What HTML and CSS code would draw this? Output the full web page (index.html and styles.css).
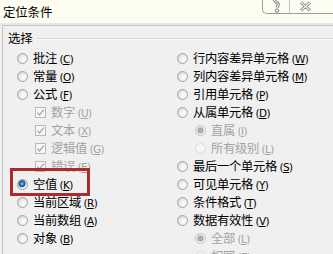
FILE: index.html
```html
<!DOCTYPE html>
<html lang="zh-CN">
<head>
<meta charset="utf-8">
<link rel="stylesheet" href="styles.css">
</head>
<body>
<div class="dlg">
  <div class="titlebar">
    <span class="title">定位条件</span>
    <div class="caps">
      <span class="cap help">
        <svg width="10" height="14" viewBox="0 0 10 14">
          <path d="M2.5 0 C2.5 3 7.5 2.5 6 5.5 L5.2 7.5" fill="none" stroke="#7a7a7a" stroke-width="3"/>
          <path d="M2.5 0 C2.5 3 7.5 2.5 6 5.5 L5.2 7.5" fill="none" stroke="#fdfcf1" stroke-width="1.1"/>
          <circle cx="5" cy="10.6" r="1.7" fill="none" stroke="#7a7a7a" stroke-width="1"/>
        </svg>
      </span>
      <span class="cap close">
        <svg width="13" height="11" viewBox="0 0 13 11">
          <path d="M2 1.5 L11 9.5 M11 1.5 L2 9.5" fill="none" stroke="#7a7a7a" stroke-width="3"/>
          <path d="M2 1.5 L11 9.5 M11 1.5 L2 9.5" fill="none" stroke="#fdfcf1" stroke-width="1.1"/>
        </svg>
      </span>
    </div>
  </div>
  <div class="client">
    <div class="ghead"><span class="glabel">选择</span><i class="gline"></i></div>
    <div class="cols">
      <div class="col">
        <div class="row"><span class="radio"></span><span class="lbl">批注 <span class="acc">(<u>C</u>)</span></span></div>
        <div class="row"><span class="radio"></span><span class="lbl">常量 <span class="acc">(<u>O</u>)</span></span></div>
        <div class="row"><span class="radio"></span><span class="lbl">公式 <span class="acc">(<u>F</u>)</span></span></div>
        <div class="row sub dis"><span class="check"><svg width="9" height="9" viewBox="0 0 9 9"><path d="M1.3 4.6 L3.5 7 L7.8 1.6" fill="none" stroke="#a9a9a9" stroke-width="1.4"/></svg></span><span class="lbl">数字 <span class="acc">(<u>U</u>)</span></span></div>
        <div class="row sub dis"><span class="check"><svg width="9" height="9" viewBox="0 0 9 9"><path d="M1.3 4.6 L3.5 7 L7.8 1.6" fill="none" stroke="#a9a9a9" stroke-width="1.4"/></svg></span><span class="lbl">文本 <span class="acc">(<u>X</u>)</span></span></div>
        <div class="row sub dis"><span class="check"><svg width="9" height="9" viewBox="0 0 9 9"><path d="M1.3 4.6 L3.5 7 L7.8 1.6" fill="none" stroke="#a9a9a9" stroke-width="1.4"/></svg></span><span class="lbl">逻辑值 <span class="acc">(<u>G</u>)</span></span></div>
        <div class="row sub dis"><span class="check"><svg width="9" height="9" viewBox="0 0 9 9"><path d="M1.3 4.6 L3.5 7 L7.8 1.6" fill="none" stroke="#a9a9a9" stroke-width="1.4"/></svg></span><span class="lbl">错误 <span class="acc">(<u>E</u>)</span></span></div>
        <div class="row hl"><span class="radio on"></span><span class="lbl">空值 <span class="acc">(<u>K</u>)</span></span></div>
        <div class="row"><span class="radio"></span><span class="lbl">当前区域 <span class="acc">(<u>R</u>)</span></span></div>
        <div class="row"><span class="radio"></span><span class="lbl">当前数组 <span class="acc">(<u>A</u>)</span></span></div>
        <div class="row"><span class="radio"></span><span class="lbl">对象 <span class="acc">(<u>B</u>)</span></span></div>
      </div>
      <div class="col">
        <div class="row"><span class="radio"></span><span class="lbl">行内容差异单元格 <span class="acc">(<u>W</u>)</span></span></div>
        <div class="row"><span class="radio"></span><span class="lbl">列内容差异单元格 <span class="acc">(<u>M</u>)</span></span></div>
        <div class="row"><span class="radio"></span><span class="lbl">引用单元格 <span class="acc">(<u>P</u>)</span></span></div>
        <div class="row"><span class="radio"></span><span class="lbl">从属单元格 <span class="acc">(<u>D</u>)</span></span></div>
        <div class="row sub dis"><span class="radio dison"></span><span class="lbl">直属 <span class="acc">(<u>I</u>)</span></span></div>
        <div class="row sub dis"><span class="radio disoff"></span><span class="lbl">所有级别 <span class="acc">(<u>L</u>)</span></span></div>
        <div class="row"><span class="radio"></span><span class="lbl">最后一个单元格 <span class="acc">(<u>S</u>)</span></span></div>
        <div class="row"><span class="radio"></span><span class="lbl">可见单元格 <span class="acc">(<u>Y</u>)</span></span></div>
        <div class="row"><span class="radio"></span><span class="lbl">条件格式 <span class="acc">(<u>T</u>)</span></span></div>
        <div class="row"><span class="radio"></span><span class="lbl">数据有效性 <span class="acc">(<u>V</u>)</span></span></div>
        <div class="row sub dis"><span class="radio dison"></span><span class="lbl">全部 <span class="acc">(<u>L</u>)</span></span></div>
        <div class="row sub dis"><span class="radio disoff"></span><span class="lbl">相同 <span class="acc">(<u>E</u>)</span></span></div>
      </div>
    </div>
  </div>
</div>
</body>
</html>
```

FILE: styles.css
```css
html, body {
  margin: 0;
  padding: 0;
}
body {
  width: 333px;
  height: 254px;
  overflow: hidden;
  background: #f0f0f0;
  font-family: "Noto Sans CJK SC", "Liberation Sans", sans-serif;
  color: #000;
}
.dlg {
  width: 333px;
  height: 254px;
  display: flex;
  flex-direction: column;
}
.titlebar {
  height: 23px;
  background: #fdfcf1;
  border-bottom: 2px solid #e9e9e4;
  display: flex;
  align-items: flex-start;
  flex: none;
}
.title {
  font-size: 12.5px;
  line-height: 24px;
  padding-left: 3px;
  letter-spacing: -0.2px;
}
.caps {
  margin-left: auto;
  display: flex;
  height: 14px;
  width: 71px;
  border-left: 1px solid #9e9e9e;
  border-bottom: 1px solid #9e9e9e;
  border-bottom-left-radius: 5px;
  box-sizing: border-box;
}
.cap {
  display: flex;
  align-items: flex-start;
  justify-content: center;
}
.help {
  width: 27px;
  border-right: 1px solid #c4c4c4;
  padding-left: 2px;
  box-sizing: border-box;
}
.close {
  flex: 1;
  padding-top: 1px;
  padding-right: 12px;
}
.client {
  flex: 1;
  margin-left: 2px;
  border-top: 1px solid #c2c2c2;
  border-left: 1px solid #c2c2c2;
  padding-left: 14px;
  background: #f0f0f0;
}
.ghead {
  display: flex;
  align-items: center;
  height: 16px;
  margin-top: 4px;
  margin-left: -9px;
}
.glabel {
  font-size: 12.5px;
  line-height: 16px;
  letter-spacing: -0.3px;
}
.gline {
  flex: 1;
  height: 0;
  border-top: 1px solid #d6d6d6;
  border-bottom: 1px solid #fafafa;
  margin-left: 4px;
  margin-top: 2px;
}
.cols {
  display: grid;
  grid-template-columns: 160px 1fr;
  margin-top: 3px;
}
.col {
  display: flex;
  flex-direction: column;
}
.row {
  height: 18px;
  display: flex;
  align-items: center;
  gap: 5px;
  white-space: nowrap;
}
.row.sub {
  padding-left: 18px;
}
.lbl {
  font-size: 12.3px;
  line-height: 18px;
  letter-spacing: -0.3px;
}
.acc {
  font-family: "DejaVu Sans", "Liberation Sans", sans-serif;
  font-size: 10.5px;
  letter-spacing: -0.6px;
}
.acc u {
  text-underline-offset: 1px;
}
.dis .lbl {
  color: #a3a3a3;
}
.radio {
  width: 11px;
  height: 11px;
  flex: none;
  border-radius: 50%;
  box-sizing: border-box;
  border: 1px solid #a4a4a4;
  background: radial-gradient(circle at 62% 62%, #fdfdfd 0, #f1f1f1 40%, #cfcfcf 85%);
}
.radio.on {
  border-color: #8e9aa8;
  background:
    radial-gradient(circle at 45% 42%, #9cc8f2 0, #3f7cc0 1.6px, #1d4f8f 3px, #1d4f8f 3.3px, transparent 3.8px),
    radial-gradient(circle at 62% 62%, #fdfdfd 0, #f1f1f1 40%, #cfcfcf 85%);
}
.radio.dison {
  border-color: #c4c4c4;
  background:
    radial-gradient(circle at 50% 50%, #b3b3b3 0, #a8a8a8 2.8px, transparent 3.4px),
    radial-gradient(circle at 62% 62%, #fdfdfd 0, #f3f3f3 45%, #dedede 85%);
}
.radio.disoff {
  border-color: #dadada;
  background: #f5f5f5;
}
.check {
  width: 11px;
  height: 11px;
  flex: none;
  box-sizing: border-box;
  border: 1px solid #b9b9b9;
  background: #f7f7f7;
  display: flex;
  align-items: center;
  justify-content: center;
}
.row.hl {
  position: relative;
}
.row.hl::after {
  content: "";
  position: absolute;
  left: -7px;
  top: -7px;
  width: 80px;
  height: 28px;
  box-sizing: border-box;
  border: 3px solid #ad2a2f;
}
```
